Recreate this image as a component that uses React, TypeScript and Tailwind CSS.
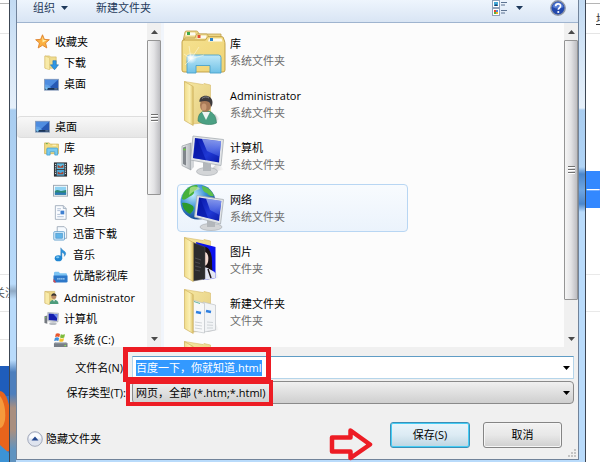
import { useEffect, useRef, useState } from 'react'
import type { ReactNode } from 'react'
import clsx from 'clsx'

/* ---------- small tree icons (16x16 grid) ---------- */

function SmallIcon({ children }: { children: ReactNode }) {
  return (
    <svg viewBox="0 0 16 16" className="w-[15px] h-[15px] shrink-0" aria-hidden="true">
      {children}
    </svg>
  )
}

const StarIcon = () => (
  <SmallIcon>
    <path d="M8 .8l2 4.9 5.3.4-4 3.5 1.3 5.3L8 12l-4.600 2.900 1.300-5.300-4-3.500 5.300-.4z" fill="#fbb040" stroke="#dd7f2a" strokeWidth=".9" />
    <path d="M8 3l1.200 3.400 3.300.3L8 9z" fill="#fff0a8" />
  </SmallIcon>
)

const DownloadsIcon = () => (
  <SmallIcon>
    <path d="M1 1h5l1 1h6V14H1z" fill="#efdc8e" stroke="#d3b763" strokeWidth=".7" />
    <path d="M1 1l5 2V16l-5-2z" fill="#f8eaa8" stroke="#d3b763" strokeWidth=".5" />
    <path d="M9.500 6h3.500v4.500h2.500L11.200 15.800l-4.400-5.300h2.700z" fill="#2f96e4" stroke="#1c6fb8" strokeWidth=".6" />
  </SmallIcon>
)

const DesktopIcon = () => (
  <SmallIcon>
    <rect x=".5" y="2.500" width="15" height="11.500" fill="#2759b4" stroke="#8fa2bd" />
    <path d="M1 3h14L5 12H1z" fill="#4f8de0" />
    <path d="M1 8c4 0 6 2 7 5H1z" fill="#6fb2ee" opacity=".6" />
    <rect x="1" y="11.800" width="14" height="1.800" fill="#19304f" />
    <circle cx="2.600" cy="12.300" r="1.300" fill="#7cc4f0" />
    <rect x="11" y="12.200" width="3.500" height="1" fill="#7c93ae" />
  </SmallIcon>
)

const LibraryIcon = () => (
  <SmallIcon>
    <path d="M.6 2h5l1 1.300h8.800V13.500H.6z" fill="#f1dc83" stroke="#cdb05a" strokeWidth=".8" />
    <path d="M2 2.800h2" stroke="#58a947" strokeWidth="1" />
    <path d="M9 4.500h4" stroke="#fff7cf" strokeWidth="1" />
    <path d="M3 8.500q0-1 1-1h9.500q1 0 1 1V15h-3v-3.500h-5V15H3z" fill="#79c9f0" stroke="#3f9fd1" strokeWidth=".8" />
  </SmallIcon>
)

const VideoIcon = () => (
  <SmallIcon>
    <rect x="1.500" y="1" width="13" height="14" fill="#3b3f45" stroke="#24272b" />
    <rect x="4" y="1.500" width="8" height="6" fill="#5dbbe2" />
    <rect x="4" y="8.500" width="8" height="6" fill="#4aa6d6" />
    <path d="M5 3l3 2 3-2v3H5zM5 10l3 2 3-2v3H5z" fill="#a8452f" />
    <path d="M2.700 2v12M13.300 2v12" stroke="#dfe4e8" strokeWidth="1" strokeDasharray="1.200 1.200" />
  </SmallIcon>
)

const PictureIcon = () => (
  <SmallIcon>
    <rect x=".5" y="2.500" width="15" height="11.500" fill="#fbfbfb" stroke="#9aa5b1" />
    <rect x="2" y="4" width="12" height="8.500" fill="#8fd2f2" />
    <path d="M2 8.500c3-2.500 5 0 7 0s3-1 5-1v5H2z" fill="#2d8a76" />
    <path d="M2 10.500c4-1 8 .5 12-.5v2.500H2z" fill="#2e79b8" />
  </SmallIcon>
)

const DocumentIcon = () => (
  <SmallIcon>
    <path d="M2.500.7h8.500l3 3v11.600H2.500z" fill="#fafcff" stroke="#8d9cae" strokeWidth=".8" />
    <path d="M11 .7v3h3" fill="#dce4ee" stroke="#8d9cae" strokeWidth=".7" />
    <path d="M4.500 4h4M4.500 6h3M4.500 10h3M4.500 12.500h7" stroke="#9aaec8" strokeWidth=".8" />
    <rect x="8" y="6" width="4" height="4" fill="#3f7fd0" />
  </SmallIcon>
)

const ThunderIcon = () => (
  <SmallIcon>
    <path d="M4.500.7H12l2.500 2.500v10H4.500z" fill="#f6fafe" stroke="#8d9cae" strokeWidth=".8" />
    <rect x=".8" y="6" width="11.500" height="9" rx="1" fill="#d8ecfa" stroke="#5f9fcd" strokeWidth=".9" />
    <rect x="3" y="8" width="7" height="5" fill="#61b4e8" stroke="#3889c2" strokeWidth=".6" />
  </SmallIcon>
)

const MusicIcon = () => (
  <SmallIcon>
    <path d="M8.300 11V.8c.6 2.400 4.700 3.200 5.200 5.600.2 1.500-.7 2.700-1.500 3.600.6-2.500-.6-3.800-2.500-4.200V12z" fill="#2f94dc" stroke="#1b6cae" strokeWidth=".4" />
    <ellipse cx="5.800" cy="12" rx="4" ry="3.300" fill="#2086d2" />
    <ellipse cx="5" cy="11" rx="1.800" ry="1.100" fill="#7cc6f2" />
  </SmallIcon>
)

const YoukuIcon = () => (
  <SmallIcon>
    <path d="M1 4.500q0-1.500 1.500-1.500H6l1.500 1.500h6q1.500 0 1.500 1.500v7H1z" fill="#7cc3f2" />
    <path d="M.5 7h15v6q0 1.500-1.500 1.500H2Q.5 14.500.5 13z" fill="#2d78c9" />
    <path d="M.5 10.500l3 4H2Q.5 14.500.5 13z" fill="#e24343" />
    <path d="M4.500 10.500h8" stroke="#b9dcf7" strokeWidth="1.300" strokeDasharray="1.500 .6" />
  </SmallIcon>
)

const UserFolderIcon = () => (
  <SmallIcon>
    <path d="M1 1.500h10.500V14H1z" fill="#ebd586" stroke="#cdb163" strokeWidth=".6" />
    <path d="M1 1.500l5 2V16l-5-2z" fill="#f8eaa8" stroke="#cdb163" strokeWidth=".5" />
    <circle cx="10.500" cy="7" r="2.700" fill="#b98a66" />
    <path d="M7.800 6.500c0-4 5.500-4 5.500 0-2-1-3.500-1-5.500 0z" fill="#3a3533" />
    <path d="M6 15c0-6 9.500-6 9.500 0z" fill="#4d9c7c" />
    <path d="M9.500 10.500l1.200 2 1.200-2z" fill="#f3f6f5" />
  </SmallIcon>
)

const ComputerIcon = () => (
  <SmallIcon>
    <path d="M.5 5.500l3-.8v8.800l-3-.6z" fill="#74797f" />
    <path d="M1 7h1" stroke="#74d44b" strokeWidth="1" />
    <path d="M4 1.500l11.500.9-.6 9.200L4 10.500z" fill="#cfd5db" stroke="#969da5" strokeWidth=".6" />
    <path d="M5 2.700l9.300.7-.5 7L5 9.500z" fill="#141fae" />
    <path d="M10 3.100l4.300.3-.3 4.200z" fill="#6f8df0" />
    <ellipse cx="9.500" cy="13.500" rx="4" ry="1.500" fill="#b7bcc2" />
  </SmallIcon>
)

const SystemDriveIcon = () => (
  <SmallIcon>
    <path d="M3 .9c2-1 3-.6 4.500.1L6.700 4.400c-1.500-.7-2.500-1-4.500 0z" fill="#e8562b" />
    <path d="M8.300 1.300c1.500.7 2.700.7 4.500 0L12 4.700c-1.800.8-3 .7-4.500 0z" fill="#7dbb3c" />
    <path d="M2 5.200c2-1 3-.7 4.500 0l-.8 3.400c-1.500-.7-2.500-1-4.500 0z" fill="#3d8fdc" />
    <path d="M7.300 5.600c1.500.7 2.700.7 4.500 0L11 8.900c-1.800.8-3 .7-4.500 0z" fill="#f7c12f" />
    <path d="M1 11l2-1.500h10l2.500 1.500v3.500q0 1-1 1H2q-1 0-1-1z" fill="#777e86" />
    <path d="M1 11l2-1.500h10l2.500 1.500z" fill="#bcc3ca" />
    <circle cx="13" cy="13.300" r=".9" fill="#8ee05a" />
  </SmallIcon>
)

/* ---------- large list icons (48x48 grid) ---------- */

function LargeIcon({ children }: { children: ReactNode }) {
  return (
    <svg viewBox="0 0 48 48" className="w-12 h-12 shrink-0" aria-hidden="true">
      {children}
    </svg>
  )
}

function Gradients() {
  return (
    <svg className="absolute w-0 h-0" aria-hidden="true">
      <defs>
        <linearGradient id="flap" x1="0" y1="0" x2="1" y2="0">
          <stop offset="0" stopColor="#f0dc88" />
          <stop offset=".6" stopColor="#fbf0b5" />
          <stop offset="1" stopColor="#dcc268" />
        </linearGradient>
        <linearGradient id="folderBack" x1="0" y1="0" x2="1" y2="1">
          <stop offset="0" stopColor="#f6e7a1" />
          <stop offset="1" stopColor="#e3cc80" />
        </linearGradient>
        <linearGradient id="folderFront" x1="0" y1="0" x2="1" y2="1">
          <stop offset="0" stopColor="#f5e190" />
          <stop offset="1" stopColor="#efd476" />
        </linearGradient>
        <linearGradient id="stand" x1="0" y1="0" x2="0" y2="1">
          <stop offset="0" stopColor="#bfe8f8" />
          <stop offset="1" stopColor="#6fc1e6" />
        </linearGradient>
        <linearGradient id="screen" x1="0" y1="0" x2="1" y2="1">
          <stop offset="0" stopColor="#0615a8" />
          <stop offset=".6" stopColor="#1f38d4" />
          <stop offset="1" stopColor="#0a1aa6" />
        </linearGradient>
        <linearGradient id="glare" x1="0" y1="0" x2="0" y2="1">
          <stop offset="0" stopColor="#c3d3ff" />
          <stop offset="1" stopColor="#3a56e0" />
        </linearGradient>
        <linearGradient id="metal" x1="0" y1="0" x2="1" y2="0">
          <stop offset="0" stopColor="#eceef0" />
          <stop offset="1" stopColor="#b4b8bd" />
        </linearGradient>
        <radialGradient id="globe" cx=".35" cy=".3" r=".75">
          <stop offset="0" stopColor="#c2ecff" />
          <stop offset=".5" stopColor="#3b8fd4" />
          <stop offset="1" stopColor="#123f8c" />
        </radialGradient>
        <radialGradient id="shine">
          <stop offset="0" stopColor="#ffffff" />
          <stop offset="1" stopColor="#ffffff" stopOpacity="0" />
        </radialGradient>
        <linearGradient id="shadow" x1="0" y1="0" x2="1" y2="0">
          <stop offset="0" stopColor="#9b9b9b" stopOpacity=".6" />
          <stop offset="1" stopColor="#9b9b9b" stopOpacity="0" />
        </linearGradient>
      </defs>
    </svg>
  )
}

const LibraryLarge = () => (
  <LargeIcon>
    <path d="M4 13l2-9q.3-1 1.500-1h10q1 0 1.500 1l1 2H42v9z" fill="#ecd688" stroke="#bf9f4b" strokeWidth=".8" />
    <path d="M7 4.500h9l1 3H6.500z" fill="#fdfbf0" />
    <rect x="8" y="4" width="3" height="3" fill="#3fa84a" />
    <path d="M4 15l2-5h10l1-3q.3-1 1.300-1h9q1 0 1.500 1l1 2.500H44V16z" fill="#f1dc8e" stroke="#bf9f4b" strokeWidth=".8" />
    <path d="M18 7.500h9l1 3H18z" fill="#fdfbf0" />
    <rect x="18.500" y="7" width="3" height="3" fill="#e14c2f" />
    <path d="M3 14q0-2 2-2h21.500l1.500-2.500q.4-.8 1.500-.8H43q1 0 1.300 1l1.200 3.300q.5 1.500.5 3V42q0 2-2 2H5q-2 0-2-2z" fill="url(#folderFront)" stroke="#bd9b3f" strokeWidth=".9" />
    <path d="M30 10.500h12.500l1 3H29z" fill="#fdfbf0" />
    <rect x="31" y="10" width="3" height="3" fill="#2a83cc" />
    <path d="M8 29.500q0-2.500 2.500-2.500h29q2.500 0 2.500 2.500V45H31v-7.500H17V45H8z" fill="url(#stand)" stroke="#4ba3cc" strokeWidth=".9" />
    <path d="M12 31l-7-5M12 31l-2-13M12 31l8-12M12 31l13-4M12 31l-6 6" stroke="#fffbe2" strokeWidth=".7" opacity=".8" />
    <circle cx="12" cy="30" r="6" fill="url(#shine)" />
  </LargeIcon>
)

function OpenFolder({ children }: { children?: ReactNode }) {
  return (
    <LargeIcon>
      <path d="M28 44l12-2-4-8z" fill="url(#shadow)" />
      <path d="M5.500 1.500L24 4.500l1-1 6.500 1.500v37L14 44z" fill="url(#folderBack)" stroke="#d6bb6a" strokeWidth=".6" />
      {children}
      <path d="M5.500 1.500l8.700 5V45.500l-8.700-5z" fill="url(#flap)" stroke="#cfb260" strokeWidth=".7" />
    </LargeIcon>
  )
}

const AdministratorLarge = () => (
  <OpenFolder>
    <path d="M33 43l8-4-5-5z" fill="url(#shadow)" />
    <path d="M19 41c0-8 4-10 9-10s9 4 9.500 12c-5 2.500-14 2-18.500-2z" fill="#4ba083" stroke="#2f7a5f" strokeWidth=".6" />
    <path d="M23 32l4 8 4-8z" fill="#eef5f3" />
    <ellipse cx="26.500" cy="25" rx="5.500" ry="7" fill="#a87a58" />
    <ellipse cx="25" cy="27" rx="2.500" ry="3.500" fill="#c99a74" />
    <path d="M20.500 22c-1-8 12.500-8.500 13 0 0 2-.5 4-1.500 5-.5-3-1-4-2-5-3-1.500-6-1-9.500 0z" fill="#3d3a3c" />
    <path d="M23 18.500c2-2 5-2 7-.5" stroke="#85878c" strokeWidth="1" fill="none" />
  </OpenFolder>
)

const ComputerLarge = () => (
  <LargeIcon>
    <path d="M30 40l15-2-6-8z" fill="url(#shadow)" />
    <path d="M3 14l9-3v27l-9-4.500z" fill="url(#metal)" stroke="#8d9399" strokeWidth=".6" />
    <path d="M4 15.500l3-1v19l-3-1.500z" fill="#81868c" />
    <path d="M4.500 17.500h2" stroke="#66dd33" strokeWidth="1.600" />
    <path d="M12 11l3-2v26l-3 3z" fill="#d3d6d9" />
    <ellipse cx="28" cy="39.500" rx="10.500" ry="4" fill="#d3d5d7" stroke="#a2a7ac" strokeWidth=".6" />
    <path d="M24 30l8 2v7h-8z" fill="#b3b7bb" />
    <path d="M14 4l30.500 3.500L42 33.500 11.500 28z" fill="#e2e5e8" stroke="#a7adb3" strokeWidth=".8" />
    <path d="M16 6l26 3.200-2 21.300-26-4.600z" fill="url(#screen)" />
    <path d="M23 7l19 2.200-1.500 15.300L28 19z" fill="url(#glare)" opacity=".65" />
    <path d="M18 6.300l9 22L14 26z" fill="#0413a0" opacity=".6" />
  </LargeIcon>
)

const NetworkLarge = () => (
  <LargeIcon>
    <circle cx="19" cy="18" r="17.500" fill="url(#globe)" />
    <path d="M6 7C9 3 14 1 18 1c2 3-1 5-3 6 1 3-3 5-5 6s-4 4-7 2c0-3 1-6 3-8z" fill="#46b13b" />
    <path d="M3 19c4-1 8 1 11 3 2 3-1 6-3 8-2-1-6-4-7-7z" fill="#2c9a2b" />
    <path d="M23 2c6 1 10 5 12 10-3 1-6-1-7-3-3 0-5-4-5-7z" fill="#5cbf4b" />
    <path d="M11 4c3-2 8-2 10 1-4 1-8 3-11 6z" fill="#d4f3a6" opacity=".6" />
    <ellipse cx="32" cy="43" rx="11" ry="3.500" fill="#d3d5d7" stroke="#a2a7ac" strokeWidth=".6" />
    <path d="M28 36l8 2v5h-8z" fill="#b3b7bb" />
    <path d="M18 11.500l26.500 4L41.500 40 15.500 33z" fill="#e2e5e8" stroke="#a7adb3" strokeWidth=".8" />
    <path d="M20 13.500l22.300 3.400-2.300 20-22.200-5.700z" fill="url(#screen)" />
    <path d="M27 14.600l15.300 2.300-1.800 14L31 26z" fill="url(#glare)" opacity=".65" />
    <path d="M21 13.700l8 20.300-11-2.800z" fill="#0413a0" opacity=".6" />
  </LargeIcon>
)

const PicturesLarge = () => (
  <OpenFolder>
    <path d="M17 6l19.500 5v31l-12 2z" fill="#0b12ee" />
    <path d="M24 11c5-2 9 5 9 14s1 10 0 14l-9 2z" fill="#1b1214" />
    <path d="M25 16c4 0 5 5 4 10-1 3-3 4-4 4z" fill="#f3d8cf" />
    <path d="M25 31c5 1 9 4 11.500 6v5l-11.500 2z" fill="#e3e6f4" />
    <path d="M29 33l3 9" stroke="#1b1214" strokeWidth="1.500" />
    <path d="M14 6.500l12 4.500v32l-12 2z" fill="#2b2b2d" stroke="#55565a" strokeWidth=".5" />
    <path d="M16 22l6 2M16 26l5 1.500M16 30l6 1.500M16 34l5 1" stroke="#606064" strokeWidth=".6" />
  </OpenFolder>
)

const NewFolderLarge = () => (
  <OpenFolder>
    <path d="M24 14l12.500 3v25L25 44z" fill="#f2f4f6" stroke="#b5babf" strokeWidth=".6" />
    <path d="M27 23l5 1" stroke="#2f7fe0" strokeWidth="2.400" />
    <path d="M28 34l6 .5M28 37l6 .3M28 40h6" stroke="#c0c5ca" strokeWidth=".7" />
    <path d="M14 12l11.500 3.500V45L14 43z" fill="#f7f8f9" stroke="#b5babf" strokeWidth=".6" />
    <path d="M15 13.500l6 2" stroke="#65b4a0" strokeWidth="1" />
    <path d="M17 24l5 1" stroke="#2f7fe0" strokeWidth="2.400" />
    <path d="M16 34l7 1M16 37l7 1M16 40l7 1" stroke="#c0c5ca" strokeWidth=".7" />
  </OpenFolder>
)

const PlainFolderLarge = () => <OpenFolder />

/* ---------- data ---------- */

const treeItems = [
  { label: '收藏夹', icon: StarIcon, level: 0 },
  { label: '下载', icon: DownloadsIcon, level: 1 },
  { label: '桌面', icon: DesktopIcon, level: 1 },
  null,
  { label: '桌面', icon: DesktopIcon, level: 0, selected: true },
  { label: '库', icon: LibraryIcon, level: 1 },
  { label: '视频', icon: VideoIcon, level: 2 },
  { label: '图片', icon: PictureIcon, level: 2 },
  { label: '文档', icon: DocumentIcon, level: 2 },
  { label: '迅雷下载', icon: ThunderIcon, level: 2 },
  { label: '音乐', icon: MusicIcon, level: 2 },
  { label: '优酷影视库', icon: YoukuIcon, level: 2 },
  { label: 'Administrator', icon: UserFolderIcon, level: 1 },
  { label: '计算机', icon: ComputerIcon, level: 1 },
  { label: '系统 (C:)', icon: SystemDriveIcon, level: 2 },
]

const files = [
  { name: '库', type: '系统文件夹', icon: LibraryLarge },
  { name: 'Administrator', type: '系统文件夹', icon: AdministratorLarge },
  { name: '计算机', type: '系统文件夹', icon: ComputerLarge },
  { name: '网络', type: '系统文件夹', icon: NetworkLarge, active: true },
  { name: '图片', type: '文件夹', icon: PicturesLarge },
  { name: '新建文件夹', type: '文件夹', icon: NewFolderLarge },
  { name: '', type: '', icon: PlainFolderLarge },
]

const indent = ['pl-[18px]', 'pl-[27px]', 'pl-9']

/* ---------- parts ---------- */

function Caret({ className }: { className?: string }) {
  return (
    <svg viewBox="0 0 7 4" className={clsx('w-[7px] h-1 shrink-0', className)} aria-hidden="true">
      <path d="M0 0h7L3.500 4z" fill="currentColor" />
    </svg>
  )
}

function ScrollBar({ thumb }: { thumb: string }) {
  return (
    <div className="w-3.5 shrink-0 flex flex-col bg-[#f0f0f0] text-[#4a4a4a]">
      <button aria-label="向上滚动" className="h-[17px] shrink-0 flex items-center justify-center">
        <Caret className="rotate-180" />
      </button>
      <div className="flex-1 min-h-0">
        <div
          className={clsx(
            'flex flex-col items-center justify-center gap-px rounded-[1px] border border-[#959595] bg-linear-to-r from-[#f5f5f5] via-[#e3e3e5] to-[#bdbdc1]',
            thumb
          )}
        >
          <span className="w-[7px] h-0.5 bg-[#707070] border-b border-white" />
          <span className="w-[7px] h-0.5 bg-[#707070] border-b border-white" />
          <span className="w-[7px] h-0.5 bg-[#707070] border-b border-white" />
        </div>
      </div>
      <button aria-label="向下滚动" className="h-[17px] shrink-0 flex items-center justify-center">
        <Caret />
      </button>
    </div>
  )
}

function Toolbar() {
  return (
    <div className="h-[23px] shrink-0 flex items-center pl-4 pr-3 pb-1.5 border-b border-[#9fb4cf] bg-linear-to-b from-[#eef5fd] to-[#d9e5f4] text-[#1e395b]">
      <button className="flex items-center gap-1.5">
        组织
        <Caret />
      </button>
      <button className="ml-7">新建文件夹</button>
      <button aria-label="更改视图" className="ml-auto flex items-center gap-2">
        <svg viewBox="0 0 16 16" className="w-4 h-4" aria-hidden="true">
          <rect x=".5" y=".5" width="7" height="7" fill="#fff" stroke="#8fa1b8" />
          <rect x="2" y="2" width="4" height="4" fill="#43a9d8" />
          <path d="M2 6l2-2 2 2z" fill="#1c3c66" />
          <rect x=".5" y="8.500" width="7" height="7" fill="#fff" stroke="#8fa1b8" />
          <rect x="2" y="10" width="2" height="2" fill="#e8482c" />
          <rect x="4" y="10" width="2" height="2" fill="#4a8ee0" />
          <rect x="2" y="12" width="2" height="2" fill="#58b13e" />
          <rect x="4" y="12" width="2" height="2" fill="#f0b429" />
          <path d="M9 2.500h6M9 5h4M9 10.500h6M9 13h4" stroke="#5d7391" />
        </svg>
        <Caret />
      </button>
      <button aria-label="帮助" className="ml-[27px]">
        <svg viewBox="0 0 16 16" className="w-4 h-4" aria-hidden="true">
          <circle cx="8" cy="8" r="7.200" fill="#2349ad" stroke="#9299a6" strokeWidth="1.400" />
          <path d="M2.500 7C3 .5 13 .5 13.500 7 10 9 6 9 2.500 7z" fill="#6b93e4" opacity=".7" />
          <path d="M5.600 6.300c0-3.300 5-3.200 5-.2 0 1.800-2.300 1.900-2.300 3.700" fill="none" stroke="#fff" strokeWidth="1.700" />
          <circle cx="8.300" cy="12" r="1.100" fill="#fff" />
        </svg>
      </button>
    </div>
  )
}

function FolderTree() {
  return (
    <nav className="w-[130px] shrink-0 overflow-hidden pt-2">
      <ul className="h-80 grid auto-rows-fr">
        {treeItems.map((item, i) =>
          item ? (
            <li
              key={i}
              className={clsx(
                'flex items-center gap-[5px] whitespace-nowrap',
                indent[item.level],
                item.selected && 'rounded-l-sm border-y border-[#dedede] bg-linear-to-b from-[#f8f8f8] to-[#e6e6e6]'
              )}
            >
              <item.icon />
              {item.label}
            </li>
          ) : (
            <li key={i} />
          )
        )}
      </ul>
    </nav>
  )
}

function FileList() {
  return (
    <ul className="flex-1 min-w-0 overflow-hidden flex flex-col gap-1 pt-[5px] pl-[13px]">
      {files.map(({ name, type, icon: Icon, active }, i) => (
        <li
          key={i}
          className={clsx(
            'w-[231px] h-12 shrink-0 flex items-center gap-[3px] pl-px rounded-sm border',
            active ? 'border-[#b8d6f3] bg-linear-to-b from-[#f8fbfe] to-[#ebf3fc]' : 'border-transparent'
          )}
        >
          <Icon />
          <div className="leading-[17px]">
            <div>{name}</div>
            <div className="text-[#6d6d6d]">{type}</div>
          </div>
        </li>
      ))}
    </ul>
  )
}

function SaveForm() {
  const [name, setName] = useState('百度一下，你就知道.html')
  const input = useRef<HTMLInputElement>(null)

  useEffect(() => {
    input.current?.focus()
    input.current?.select()
  }, [])

  return (
    <form className="relative flex-1 flex flex-col pt-[9px]" onSubmit={(e) => e.preventDefault()}>
      <div className="grid grid-cols-[109px_1fr] gap-x-1.5 gap-y-0.5 items-center pr-1">
        <label htmlFor="filename" className="text-right">文件名(N):</label>
        <div className="h-[23px] flex items-center px-[3px] border border-[#b5d5ea] border-t-[#5f9cc5] bg-white">
          <input
            id="filename"
            ref={input}
            value={name}
            onChange={(e) => setName(e.target.value)}
            className="flex-1 min-w-0 h-4 leading-4 outline-none caret-transparent selection:bg-[#3399ff] selection:text-white"
          />
          <Caret />
        </div>
        <label htmlFor="filetype" className="text-right">保存类型(T):</label>
        <div className="relative h-[23px] flex items-center rounded-sm border border-[#8a8a8a] bg-linear-to-b from-[#f0f0f0] to-[#cfcfcf]">
          <select id="filetype" className="flex-1 h-full pl-[3px] appearance-none outline-none">
            <option>网页，全部 (*.htm;*.html)</option>
          </select>
          <Caret className="absolute right-[3px] pointer-events-none" />
        </div>
      </div>

      <div className="mt-[18px] flex items-center pl-2.5 pr-4">
        <button type="button" className="mt-2 flex items-center gap-[3px]">
          <svg viewBox="0 0 16 16" className="w-4 h-4" aria-hidden="true">
            <circle cx="8" cy="8" r="7.300" fill="#dfe4ef" stroke="#a3aabb" />
            <path d="M2 7.500C2 0 14 0 14 7.500z" fill="#fbfcfe" />
            <path d="M4.500 9.500L8 5.500l3.500 4z" fill="#24478f" />
          </svg>
          隐藏文件夹
        </button>
        <button
          type="submit"
          className="ml-auto w-20 h-[26px] rounded-[3px] border border-[#3a8fb7] bg-linear-to-b from-[#eaf5fb] via-[#dcebf4] to-[#bcd5e2] ring-1 ring-inset ring-[#45cdf5]"
        >
          保存(S)
        </button>
        <button
          type="button"
          className="ml-[13px] w-[79px] h-[26px] rounded-[3px] border border-[#858585] bg-linear-to-b from-[#f2f2f2] via-[#e8e8e8] to-[#cfcfcf] ring-1 ring-inset ring-[#f6f6f6]"
        >
          取消
        </button>
      </div>

      {/* callouts drawn over the form */}
      <div className="absolute left-[106px] top-0 w-[148px] h-[35px] border-5 border-[#ed1c24] pointer-events-none" />
      <div className="absolute left-[109px] top-[33px] w-[147px] h-[26px] border-4 border-[#ed1c24] pointer-events-none" />
      <svg viewBox="0 0 44 34" className="absolute left-[312px] top-20 w-11 h-[34px] pointer-events-none" aria-hidden="true">
        <path d="M3 10.500h18.500V3.500L41 17.500 21.500 31V24.500H3z" fill="none" stroke="#ed1c24" strokeWidth="4.500" strokeLinejoin="round" />
      </svg>
      <svg viewBox="0 0 8 8" className="absolute right-0.5 bottom-0.5 w-2 h-2" aria-hidden="true">
        <path d="M6 0h2v2H6zM6 3h2v2H6zM6 6h2v2H6zM3 3h2v2H3zM3 6h2v2H3zM0 6h2v2H0z" fill="#c4c4c4" />
      </svg>
    </form>
  )
}

function LeftPage() {
  return (
    <div className="w-[9px] shrink-0 overflow-hidden flex flex-col bg-white text-[#555]">
      <div className="h-1 shrink-0 border-b border-[#b5b5b5]" />
      <div className="h-[30px] shrink-0 border-b border-[#e5e5e5]" />
      <div className="h-[241px] shrink-0 border-b border-[#e5e5e5]" />
      <div className="h-[37px] shrink-0 flex items-center border-b border-[#e5e5e5]">
        <span className="-ml-1.5 whitespace-nowrap">关注</span>
      </div>
      <div className="h-7 shrink-0 border-b border-[#e5e5e5]" />
      <div className="h-[26px] shrink-0" />
      <svg viewBox="0 0 9 96" className="w-[9px] h-24 shrink-0" aria-hidden="true">
        <rect width="9" height="96" fill="#2f74cf" />
        <path d="M0 0h9v30H0z" fill="#1f5dbb" />
        <path d="M0 25c5 1 7 6 9 14v46c-4 2-7-2-9-4z" fill="#e8641c" />
        <path d="M0 30c4 5 6 14 5 24-1 5-3 8-5 8z" fill="#f59a3c" />
        <path d="M0 79l9 8v9H0z" fill="#3c93d6" />
      </svg>
    </div>
  )
}

function RightPage() {
  return (
    <div className="w-3.5 shrink-0 overflow-hidden flex flex-col bg-white text-[#333]">
      <div className="h-1 shrink-0 border-b border-[#b5b5b5]" />
      <div className="h-[30px] shrink-0 flex items-center pl-2.5 border-b border-[#e5e5e5]">
        <a href="#" className="underline whitespace-nowrap">地图</a>
      </div>
      <div className="h-[137px] shrink-0" />
      <div className="h-[37px] shrink-0 flex items-center bg-[#3388ff] text-white">
        <span className="whitespace-nowrap text-sm">一下</span>
      </div>
      <div className="h-[67px] shrink-0 border-b border-[#e9e9e9]" />
      <div className="h-[37px] shrink-0 border-b border-[#e9e9e9]" />
    </div>
  )
}

export default function App() {
  return (
    <div className="min-h-screen flex bg-white text-[11px] leading-4 text-black font-['Open_Sans','Noto_Sans_CJK_SC',sans-serif]">
      <Gradients />
      <LeftPage />
      <main className="flex-1 min-w-0 flex border-x border-[#3c4654] bg-[#b9dbfb]">
        {/* glass edges pick up what lies behind the window */}
        <div className="w-1.5 shrink-0 bg-[linear-gradient(to_bottom,#c3dbf3_0,#e6f0fa_108px,#a9cdf0_110px,#b9dbfb_284px,#8fa9c4_291px,#b9dbfb_299px,#b9dbfb_360px,#4d7fbd_372px,#4d7fbd_394px,#a98f80_408px,#a98f80_430px,#5f93c0_450px)]" />
        <div className="flex-1 min-w-0 flex flex-col mb-0.5 border-x border-b border-[#71839a] bg-[#f0f0f0]">
          <Toolbar />
          <div className="h-[324px] shrink-0 flex bg-[#fcfcfc]">
            <FolderTree />
            <ScrollBar thumb="h-[155px]" />
            <div className="w-[3px] shrink-0 bg-[#f1f5fb]" />
            <FileList />
            <ScrollBar thumb="h-[260px]" />
          </div>
          <SaveForm />
        </div>
        <div className="w-1.5 shrink-0 bg-[linear-gradient(to_bottom,#c3dbf3_0,#e6f0fa_108px,#a9cdf0_110px,#b0d4f6_167px,#4a86cc_174px,#6fa6e2_190px,#4a86cc_204px,#b9dbfb_212px)]" />
      </main>
      <RightPage />
    </div>
  )
}
